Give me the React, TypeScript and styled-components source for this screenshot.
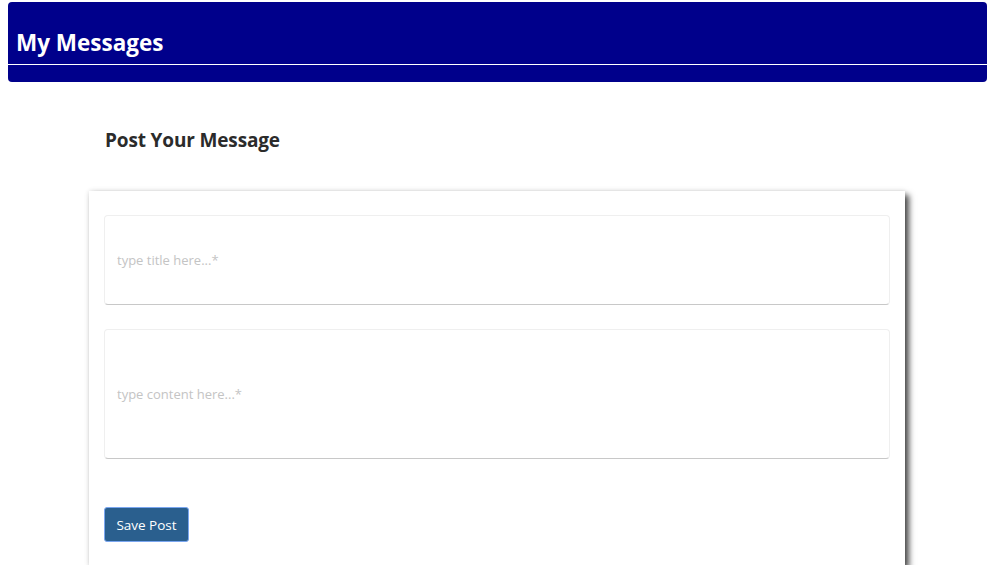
import React from "react";
import styled, { createGlobalStyle } from "styled-components";

const Global = createGlobalStyle`
  html, body { margin: 0; padding: 0; background: #fff; }
  body { font-family: "Open Sans", "Noto Sans", sans-serif; }
  * { box-sizing: border-box; }
`;

const Page = styled.div`
  padding: 2px 8px 0 8px;
`;

const Header = styled.header`
  background: #00008b;
  border-radius: 4px;
  height: 80px;
  padding-top: 26px;
`;

const Title = styled.h1`
  margin: 0;
  color: #fff;
  font-size: 22.5px;
  font-weight: 700;
  line-height: 30px;
  padding-left: 8px;
  padding-bottom: 6px;
  border-bottom: 1px solid #fff;
  letter-spacing: 0;
`;

const Content = styled.main`
  padding: 0 82px 0 81px;
`;

const Heading = styled.h2`
  margin: 0;
  padding: 46px 0 0 16px;
  font-size: 19px;
  font-weight: 700;
  line-height: 24px;
  color: #2b2b2b;
  letter-spacing: -0.15px;
`;

const Card = styled.form`
  margin-top: 39px;
  background: #fff;
  padding: 24px 15px 23px 15px;
  box-shadow: 4px 4px 6px rgba(0, 0, 0, 0.7), 0 0 5px rgba(0, 0, 0, 0.12);
  display: flex;
  flex-direction: column;
  gap: 24px;
`;

const Field = styled.input<{ $h: number }>`
  display: block;
  width: 100%;
  height: ${(p) => p.$h}px;
  border: 1px solid #efefef;
  border-bottom: 1px solid #c8c8c8;
  border-radius: 4px;
  padding: 0 12px;
  font-family: "Open Sans", "Noto Sans", sans-serif;
  font-size: 13px;
  color: #333;
  background: #fff;
  outline: none;
  &::placeholder { color: #c4c4c4; }
`;

const Button = styled.button`
  align-self: flex-start;
  margin-top: 24px;
  width: 85px;
  height: 35px;
  background: #2a5f8e;
  color: #fff;
  border: 1px solid #7aa6f0;
  border-radius: 3px;
  font-family: "Open Sans", "Noto Sans", sans-serif;
  font-size: 13.5px;
  padding: 0;
`;

export default function App() {
  return (
    <>
      <Global />
      <Page>
        <Header>
          <Title>My Messages</Title>
        </Header>
        <Content>
          <Heading>Post Your Message</Heading>
          <Card onSubmit={(e) => e.preventDefault()}>
            <Field $h={90} placeholder="type title here...*" />
            <Field $h={130} placeholder="type content here...*" />
            <Button type="submit">Save Post</Button>
          </Card>
        </Content>
      </Page>
    </>
  );
}
